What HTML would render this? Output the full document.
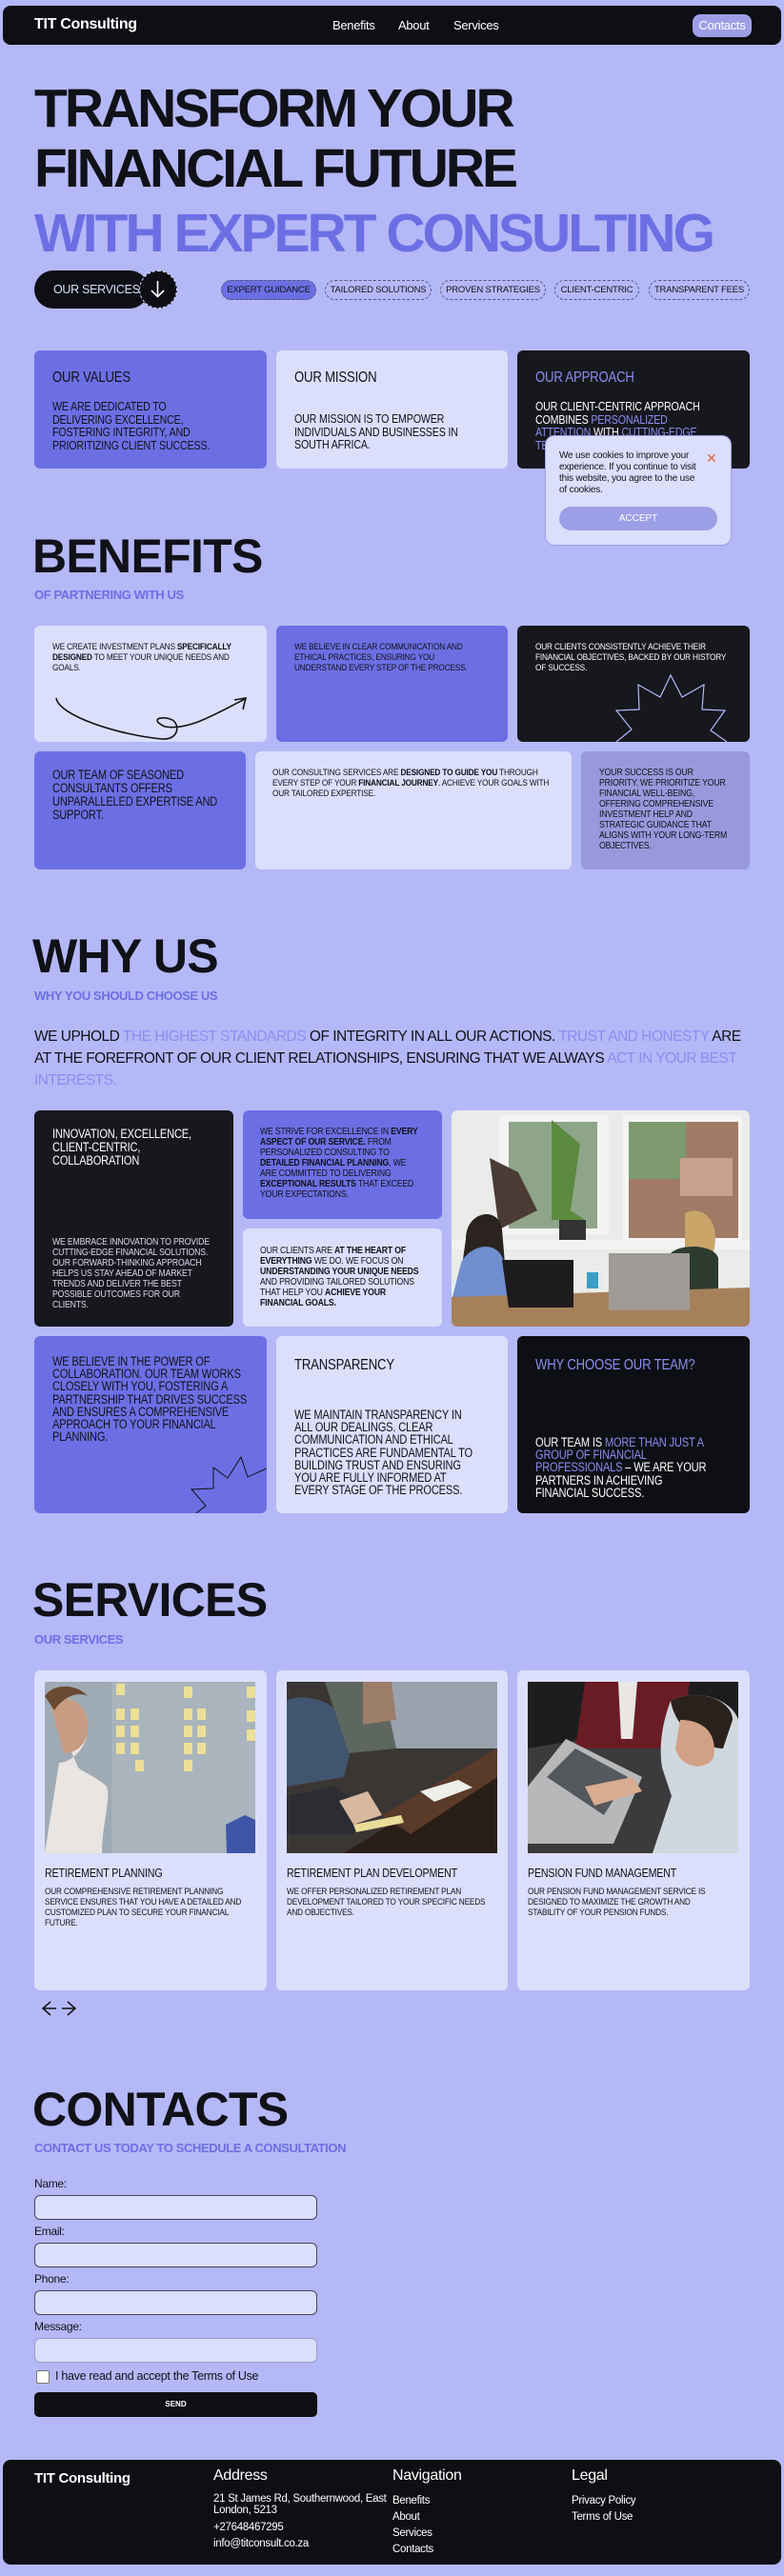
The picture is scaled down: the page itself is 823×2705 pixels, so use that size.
<!DOCTYPE html>
<html><head><meta charset="utf-8">
<style>
*{margin:0;padding:0;box-sizing:border-box}
body{width:823px;height:2705px;background:#b4b8f7;font-family:"Liberation Sans",Arial,sans-serif;color:#111118;position:relative;overflow:hidden}
.a{position:absolute}
.nav{left:3px;top:6px;width:817px;height:41px;background:#0e0f14;border-radius:8px}
.nav .logo{left:33px;top:11px;color:#fff;font-weight:bold;font-size:16px;letter-spacing:-0.3px}
.nav .l{top:13px;color:#fff;font-size:13px;letter-spacing:-0.3px}
.cbtn{left:724px;top:9px;width:62px;height:24px;background:#9d9fe6;border-radius:8px;color:#fff;font-size:13px;text-align:center;line-height:24px;letter-spacing:-0.3px}
.h1{left:36px;font-weight:bold;font-size:57px;letter-spacing:-3px;line-height:57px;white-space:nowrap}
.h2{left:34px;font-weight:bold;font-size:50px;letter-spacing:-0.7px;line-height:50px;white-space:nowrap}
.sub{left:36px;font-weight:bold;font-size:13px;color:#6c6fe3;letter-spacing:-0.4px;white-space:nowrap}
.tag{top:294px;height:21px;border:1px dashed #55577a;border-radius:11px;font-size:9.5px;line-height:19px;text-align:center;letter-spacing:-0.2px}
.card{border-radius:6px;overflow:hidden}
.p{background:#6c6fe3}.lt{background:#dcdffb}.dk{background:#17171e;color:#fff}.mid{background:#9799dc}
.t{position:absolute;font-size:9.5px;line-height:11px;letter-spacing:-0.2px;text-transform:uppercase}
.c{transform:scaleX(.82);transform-origin:0 0}
.s{transform:scaleX(.87);transform-origin:0 0}
.hl2{color:#8a8df0}
.lbl{left:36px;font-size:12px;letter-spacing:-0.3px}
.inp{left:36px;width:297px;height:26px;background:#dcdffb;border:1px solid #44465a;border-radius:6px}
.fh{color:#fff;font-size:16px;letter-spacing:-0.3px}
.fi{color:#fff;font-size:11.5px;letter-spacing:-0.3px}
</style></head><body>

<div class="a nav">
<div class="a logo">TIT Consulting</div>
<div class="a l" style="left:346px">Benefits</div>
<div class="a l" style="left:415px">About</div>
<div class="a l" style="left:473px">Services</div>
<div class="a cbtn">Contacts</div>
</div>

<div class="a h1" style="top:86px">TRANSFORM YOUR</div>
<div class="a h1" style="top:149px">FINANCIAL FUTURE</div>
<div class="a h1" style="top:217px;color:#6c6fe3">WITH EXPERT CONSULTING</div>

<div class="a" style="left:36px;top:284px;width:120px;height:40px;background:#0e0f14;border-radius:20px;color:#dcdffb;font-size:12.5px;line-height:40px;padding-left:20px;letter-spacing:-0.3px">OUR SERVICES</div>
<div class="a" style="left:146px;top:284px;width:40px;height:40px;background:#0e0f14;border-radius:50%;border:1.5px dashed #dcdffb">
<svg width="37" height="37" viewBox="0 0 37 37" style="position:absolute;left:0;top:0"><path d="M18.5 10v16M12 20l6.5 6.5L25 20" stroke="#fff" stroke-width="1.6" fill="none"/></svg></div>

<div class="a tag" style="left:232px;width:100px;background:#6c6fe3">EXPERT GUIDANCE</div>
<div class="a tag" style="left:341px;width:112px">TAILORED SOLUTIONS</div>
<div class="a tag" style="left:462px;width:111px">PROVEN STRATEGIES</div>
<div class="a tag" style="left:582px;width:89px">CLIENT-CENTRIC</div>
<div class="a tag" style="left:681px;width:106px">TRANSPARENT FEES</div>

<div class="a card p" style="left:36px;top:368px;width:244px;height:124px">
<div class="t c" style="left:19px;top:20px;font-size:16px;line-height:18px">OUR VALUES</div>
<div class="t c" style="left:19px;top:52px;font-size:13px;line-height:13.5px;white-space:nowrap">WE ARE DEDICATED TO<br>DELIVERING EXCELLENCE,<br>FOSTERING INTEGRITY, AND<br>PRIORITIZING CLIENT SUCCESS.</div></div>
<div class="a card lt" style="left:290px;top:368px;width:243px;height:124px">
<div class="t c" style="left:19px;top:20px;font-size:16px;line-height:18px">OUR MISSION</div>
<div class="t c" style="left:19px;top:65px;font-size:13px;line-height:13.5px;white-space:nowrap">OUR MISSION IS TO EMPOWER<br>INDIVIDUALS AND BUSINESSES IN<br>SOUTH AFRICA.</div></div>
<div class="a card dk" style="left:543px;top:368px;width:244px;height:124px">
<div class="t c hl2" style="left:19px;top:20px;font-size:16px;line-height:18px">OUR APPROACH</div>
<div class="t c" style="left:19px;top:52px;font-size:13px;line-height:13.5px;white-space:nowrap">OUR CLIENT-CENTRIC APPROACH<br>COMBINES <span class="hl2">PERSONALIZED</span><br><span class="hl2">ATTENTION</span> WITH <span class="hl2">CUTTING-EDGE</span><br><span class="hl2">TECHNOLOGY</span></div></div>

<div class="a" style="left:572px;top:457px;width:196px;height:116px;background:#dcdffb;border:1px solid #9d9fe6;border-radius:10px">
<div class="a" style="left:14px;top:15px;font-size:10px;line-height:12px;letter-spacing:-0.2px;width:150px">We use cookies to improve your experience. If you continue to visit this website, you agree to the use of cookies.</div>
<div class="a" style="left:168px;top:15px;color:#e0663f;font-size:14px">✕</div>
<div class="a" style="left:14px;top:74px;width:166px;height:25px;background:#9d9fe6;border-radius:13px;color:#fff;font-size:10px;text-align:center;line-height:25px">ACCEPT</div>
</div>

<div class="a h2" style="top:559px">BENEFITS</div>
<div class="a sub" style="top:617px">OF PARTNERING WITH US</div>

<div class="a card lt" style="left:36px;top:657px;width:244px;height:122px">
<div class="t s" style="left:19px;top:17px;width:232px">WE CREATE INVESTMENT PLANS <b>SPECIFICALLY DESIGNED</b> TO MEET YOUR UNIQUE NEEDS AND GOALS.</div>
<svg class="a" style="left:0;top:0" width="244" height="122"><path d="M23 76C26 95 90 115 134 119C152 120 153 104 145 99C134 94 120 98 137 106C160 110 185 96 221 77M210 78L222 76L219 88" stroke="#111" stroke-width="1.6" fill="none"/></svg></div>
<div class="a card p" style="left:290px;top:657px;width:243px;height:122px">
<div class="t s" style="left:19px;top:17px;width:232px">WE BELIEVE IN CLEAR COMMUNICATION AND ETHICAL PRACTICES, ENSURING YOU UNDERSTAND EVERY STEP OF THE PROCESS.</div></div>
<div class="a card dk" style="left:543px;top:657px;width:244px;height:122px">
<div class="t s" style="left:19px;top:17px;width:232px">OUR CLIENTS CONSISTENTLY ACHIEVE THEIR FINANCIAL OBJECTIVES, BACKED BY OUR HISTORY OF SUCCESS.</div>
<svg class="a" style="left:0;top:0" width="244" height="122"><path d="M104 122L120 109L104 89L128 88L127 62L150 75L161 52L173 75L196 62L194 88L218 89L203 110L220 122" stroke="#b4b8f7" stroke-width="1.2" fill="none"/></svg></div>

<div class="a card p" style="left:36px;top:789px;width:222px;height:124px">
<div class="t c" style="left:19px;top:18px;font-size:13.5px;line-height:14px;white-space:nowrap">OUR TEAM OF SEASONED<br>CONSULTANTS OFFERS<br>UNPARALLELED EXPERTISE AND<br>SUPPORT.</div></div>
<div class="a card lt" style="left:268px;top:789px;width:332px;height:124px">
<div class="t s" style="left:18px;top:17px;width:338px">OUR CONSULTING SERVICES ARE <b>DESIGNED TO GUIDE YOU</b> THROUGH EVERY STEP OF YOUR <b>FINANCIAL JOURNEY</b>. ACHIEVE YOUR GOALS WITH OUR TAILORED EXPERTISE.</div></div>
<div class="a card mid" style="left:610px;top:789px;width:177px;height:124px">
<div class="t s" style="left:19px;top:17px;width:156px;font-size:10px">YOUR SUCCESS IS OUR PRIORITY. WE PRIORITIZE YOUR FINANCIAL WELL-BEING, OFFERING COMPREHENSIVE INVESTMENT HELP AND STRATEGIC GUIDANCE THAT ALIGNS WITH YOUR LONG-TERM OBJECTIVES.</div></div>

<div class="a h2" style="top:979px">WHY US</div>
<div class="a sub" style="top:1038px">WHY YOU SHOULD CHOOSE US</div>
<div class="a" style="left:36px;top:1077px;width:760px;font-size:15.5px;line-height:23px;letter-spacing:-0.5px">WE UPHOLD <span class="hl2">THE HIGHEST STANDARDS</span> OF INTEGRITY IN ALL OUR ACTIONS. <span class="hl2">TRUST AND HONESTY</span> ARE AT THE FOREFRONT OF OUR CLIENT RELATIONSHIPS, ENSURING THAT WE ALWAYS <span class="hl2">ACT IN YOUR BEST INTERESTS.</span></div>

<div class="a card dk" style="left:36px;top:1166px;width:209px;height:227px">
<div class="t c" style="left:19px;top:18px;font-size:13.5px;line-height:14px;white-space:nowrap">INNOVATION, EXCELLENCE,<br>CLIENT-CENTRIC,<br>COLLABORATION</div>
<div class="t s" style="left:19px;top:133px;width:192px;font-size:10px;color:#d8d9ee">WE EMBRACE INNOVATION TO PROVIDE CUTTING-EDGE FINANCIAL SOLUTIONS. OUR FORWARD-THINKING APPROACH HELPS US STAY AHEAD OF MARKET TRENDS AND DELIVER THE BEST POSSIBLE OUTCOMES FOR OUR CLIENTS.</div></div>
<div class="a card p" style="left:255px;top:1166px;width:209px;height:114px">
<div class="t s" style="left:18px;top:17px;width:192px;font-size:10px">WE STRIVE FOR EXCELLENCE IN <b>EVERY ASPECT OF OUR SERVICE.</b> FROM PERSONALIZED CONSULTING TO <b>DETAILED FINANCIAL PLANNING</b>, WE ARE COMMITTED TO DELIVERING <b>EXCEPTIONAL RESULTS</b> THAT EXCEED YOUR EXPECTATIONS.</div></div>
<div class="a card lt" style="left:255px;top:1290px;width:209px;height:103px">
<div class="t s" style="left:18px;top:18px;width:192px;font-size:10px">OUR CLIENTS ARE <b>AT THE HEART OF EVERYTHING</b> WE DO. WE FOCUS ON <b>UNDERSTANDING YOUR UNIQUE NEEDS</b> AND PROVIDING TAILORED SOLUTIONS THAT HELP YOU <b>ACHIEVE YOUR FINANCIAL GOALS.</b></div></div>
<div class="a card" style="left:474px;top:1166px;width:313px;height:227px">
<svg width="313" height="227" viewBox="0 0 313 227">
<rect width="313" height="227" fill="#e9ece9"/>
<rect x="50" y="5" width="115" height="125" fill="#f4f5f3"/>
<rect x="60" y="12" width="93" height="112" fill="#8fa58a"/>
<rect x="180" y="5" width="125" height="135" fill="#f4f5f3"/>
<rect x="186" y="12" width="115" height="122" fill="#a07a65"/>
<path d="M186 12h60v60h-60z" fill="#7d9a6e"/>
<path d="M240 50h55v40h-55z" fill="#c8a090"/>
<path d="M40 50l30 15 20 40-40 20z" fill="#4a3b35"/>
<path d="M105 10l30 25-10 70 15 10-35 0z" fill="#5c8a3e"/>
<rect x="113" y="115" width="28" height="28" fill="#333"/>
<rect x="0" y="136" width="313" height="10" fill="#f2f2f2"/>
<path d="M15 135c0-30 35-35 38-10l5 60h-50z" fill="#2a2320"/>
<path d="M10 160c10-20 40-25 45 0l5 40h-60z" fill="#6f8fcf"/>
<path d="M245 108c20-10 38 10 30 40l-30 0z" fill="#c9a56a"/>
<path d="M230 150c10-10 45-10 50 5l0 45h-50z" fill="#2e3b2f"/>
<path d="M0 196l313-10v41H0z" fill="#a6805a"/>
<path d="M53 157h75v50H60z" fill="#1c1c1e"/>
<path d="M165 150h85v60h-85z" fill="#9f9a95"/>
<rect x="142" y="170" width="12" height="17" fill="#3ca0c6"/>
</svg></div>

<div class="a card p" style="left:36px;top:1403px;width:244px;height:186px">
<div class="t c" style="left:19px;top:20px;font-size:13.5px;line-height:13.2px;white-space:nowrap">WE BELIEVE IN THE POWER OF<br>COLLABORATION. OUR TEAM WORKS<br>CLOSELY WITH YOU, FOSTERING A<br>PARTNERSHIP THAT DRIVES SUCCESS<br>AND ENSURES A COMPREHENSIVE<br>APPROACH TO YOUR FINANCIAL<br>PLANNING.</div>
<svg class="a" style="left:0;top:0" width="244" height="186"><path d="M170 186L180 178L165 161L188 160L188 138L203 149L217 127L224 148L244 139" stroke="#111" stroke-width="1" fill="none"/></svg></div>
<div class="a card lt" style="left:290px;top:1403px;width:243px;height:186px">
<div class="t c" style="left:19px;top:22px;font-size:16px;line-height:18px">TRANSPARENCY</div>
<div class="t c" style="left:19px;top:76px;font-size:13.5px;line-height:13.2px;white-space:nowrap">WE MAINTAIN TRANSPARENCY IN<br>ALL OUR DEALINGS. CLEAR<br>COMMUNICATION AND ETHICAL<br>PRACTICES ARE FUNDAMENTAL TO<br>BUILDING TRUST AND ENSURING<br>YOU ARE FULLY INFORMED AT<br>EVERY STAGE OF THE PROCESS.</div></div>
<div class="a card" style="left:543px;top:1403px;width:244px;height:186px;background:#0e0f14;color:#fff">
<div class="t c hl2" style="left:19px;top:22px;font-size:16px;line-height:18px;white-space:nowrap">WHY CHOOSE OUR TEAM?</div>
<div class="t c" style="left:19px;top:105px;font-size:13.5px;line-height:13.2px;white-space:nowrap">OUR TEAM IS <span class="hl2">MORE THAN JUST A<br>GROUP OF FINANCIAL<br>PROFESSIONALS</span> – WE ARE YOUR<br>PARTNERS IN ACHIEVING<br>FINANCIAL SUCCESS.</div></div>

<div class="a h2" style="top:1655px">SERVICES</div>
<div class="a sub" style="top:1714px">OUR SERVICES</div>

<div class="a card lt" style="left:36px;top:1754px;width:244px;height:336px">
<svg class="a" style="left:11px;top:12px" width="221" height="180"><rect width="221" height="180" fill="#9eabb5"/><rect x="70" y="0" width="151" height="180" fill="#a9b4bc"/>
<g fill="#ecdf98"><rect x="75" y="2" width="9" height="12"/><rect x="75" y="28" width="9" height="12"/><rect x="90" y="28" width="9" height="12"/><rect x="75" y="46" width="9" height="12"/><rect x="90" y="46" width="9" height="12"/><rect x="75" y="64" width="9" height="12"/><rect x="90" y="64" width="9" height="12"/><rect x="95" y="82" width="9" height="12"/><rect x="146" y="5" width="9" height="12"/><rect x="146" y="28" width="9" height="12"/><rect x="160" y="28" width="9" height="12"/><rect x="146" y="46" width="9" height="12"/><rect x="160" y="46" width="9" height="12"/><rect x="146" y="64" width="9" height="12"/><rect x="160" y="64" width="9" height="12"/><rect x="146" y="82" width="9" height="12"/><rect x="212" y="5" width="9" height="12"/><rect x="212" y="30" width="9" height="12"/><rect x="212" y="50" width="9" height="12"/></g>
<path d="M5 20c20-10 45 5 40 35-5 20-20 30-30 30l-15 95h60c0-30 10-60 5-70C55 100 40 95 35 90z" fill="#e9e5e2"/><path d="M5 20c20-10 45 5 40 35-5 15-15 20-25 20z" fill="#c69c82"/><path d="M0 15c10-15 35-12 45 0-10-5-25 0-35 15z" fill="#6b4a33"/>
<path d="M190 150l20-10 11 5v35h-30z" fill="#3e55a8"/></svg>
<div class="t c" style="left:11px;top:206px;font-size:13px;line-height:14px;white-space:nowrap">RETIREMENT PLANNING</div>
<div class="t s" style="left:11px;top:227px;width:252px">OUR COMPREHENSIVE RETIREMENT PLANNING SERVICE ENSURES THAT YOU HAVE A DETAILED AND CUSTOMIZED PLAN TO SECURE YOUR FINANCIAL FUTURE.</div></div>
<div class="a card lt" style="left:290px;top:1754px;width:243px;height:336px">
<svg class="a" style="left:11px;top:12px" width="221" height="180"><rect width="221" height="180" fill="#3a3634"/><rect x="90" y="0" width="131" height="70" fill="#9aa3ad"/><path d="M60 180L221 80v100z" fill="#2a1e18"/><path d="M100 140L221 70v30L130 160z" fill="#5a3a28"/>
<path d="M0 20c20-10 60 0 70 40l-10 40L0 110z" fill="#41566e"/><path d="M40 0h60l15 70-50 5z" fill="#5e6660"/><path d="M80 0h30l5 40-35 5z" fill="#9c7d6a"/><path d="M0 120l50-10 40 30-20 20-70 0z" fill="#2b2d33"/><path d="M55 125l30-10 15 25-30 10z" fill="#d9b8a0"/><path d="M140 115l40-12 15 8-40 15z" fill="#eeeeea"/><path d="M70 150l50-10 3 8-50 10z" fill="#e9dd9a"/></svg>
<div class="t c" style="left:11px;top:206px;font-size:13px;line-height:14px;white-space:nowrap">RETIREMENT PLAN DEVELOPMENT</div>
<div class="t s" style="left:11px;top:227px;width:252px">WE OFFER PERSONALIZED RETIREMENT PLAN DEVELOPMENT TAILORED TO YOUR SPECIFIC NEEDS AND OBJECTIVES.</div></div>
<div class="a card lt" style="left:543px;top:1754px;width:244px;height:336px">
<svg class="a" style="left:11px;top:12px" width="221" height="180"><rect width="221" height="180" fill="#1d1d1f"/><path d="M0 70l120-20 101 60v70H0z" fill="#3b3b3d"/><path d="M60 0h110l-10 70H50z" fill="#6a1c24"/><path d="M95 0h20l-5 60h-12z" fill="#e9e6e3"/><path d="M0 110l40-50 80 40-30 70H0z" fill="#b6b8ba"/><path d="M20 100l30-30 55 30-25 40z" fill="#55585c"/><path d="M150 20c30-15 65 0 71 20v140h-90l20-60-10-30c-5-30 5-60 9-70z" fill="#cfd8de"/><path d="M150 20c30-15 65 0 65 20l-10 30c-20 0-50-20-55-50z" fill="#2a211c"/><path d="M160 40c20 0 40 10 35 40-10 15-35 10-40-10z" fill="#d0a184"/><path d="M60 110l50-10 10 15-50 15z" fill="#d8ad90"/></svg>
<div class="t c" style="left:11px;top:206px;font-size:13px;line-height:14px;white-space:nowrap">PENSION FUND MANAGEMENT</div>
<div class="t s" style="left:11px;top:227px;width:232px">OUR PENSION FUND MANAGEMENT SERVICE IS DESIGNED TO MAXIMIZE THE GROWTH AND STABILITY OF YOUR PENSION FUNDS.</div></div>

<svg class="a" style="left:38px;top:2100px" width="48" height="18"><path d="M15 2L7 9l8 7M7 9h14M33 2l8 7-8 7M41 9H27" stroke="#111" stroke-width="1.5" fill="none"/></svg>

<div class="a h2" style="top:2190px">CONTACTS</div>
<div class="a sub" style="top:2248px">CONTACT US TODAY TO SCHEDULE A CONSULTATION</div>
<div class="a lbl" style="top:2286px">Name:</div>
<div class="a inp" style="top:2305px"></div>
<div class="a lbl" style="top:2336px">Email:</div>
<div class="a inp" style="top:2355px"></div>
<div class="a lbl" style="top:2386px">Phone:</div>
<div class="a inp" style="top:2405px"></div>
<div class="a lbl" style="top:2436px">Message:</div>
<div class="a inp" style="top:2455px;border-color:#9a9cc4"></div>
<div class="a" style="left:38px;top:2489px;width:14px;height:14px;background:#fff;border:1px solid #777;border-radius:2px"></div>
<div class="a" style="left:58px;top:2488px;font-size:12.5px;letter-spacing:-0.3px">I have read and accept the Terms of Use</div>
<div class="a" style="left:36px;top:2512px;width:297px;height:26px;background:#0e0f14;border-radius:5px;color:#fff;font-size:8px;font-weight:bold;text-align:center;line-height:26px">SEND</div>

<div class="a" style="left:3px;top:2583px;width:817px;height:110px;background:#0e0f14;border-radius:8px"></div>
<div class="a" style="left:36px;top:2594px;color:#fff;font-weight:bold;font-size:15px;letter-spacing:-0.3px">TIT Consulting</div>
<div class="a fh" style="left:224px;top:2591px">Address</div>
<div class="a fh" style="left:412px;top:2591px">Navigation</div>
<div class="a fh" style="left:600px;top:2591px">Legal</div>
<div class="a fi" style="left:224px;top:2618px;line-height:12px;width:190px">21 St James Rd, Southernwood, East London, 5213</div>
<div class="a fi" style="left:224px;top:2646px;line-height:17px">+27648467295<br>info@titconsult.co.za</div>
<div class="a fi" style="left:412px;top:2618px;line-height:17px">Benefits<br>About<br>Services<br>Contacts</div>
<div class="a fi" style="left:600px;top:2618px;line-height:17px">Privacy Policy<br>Terms of Use</div>
</body></html>
